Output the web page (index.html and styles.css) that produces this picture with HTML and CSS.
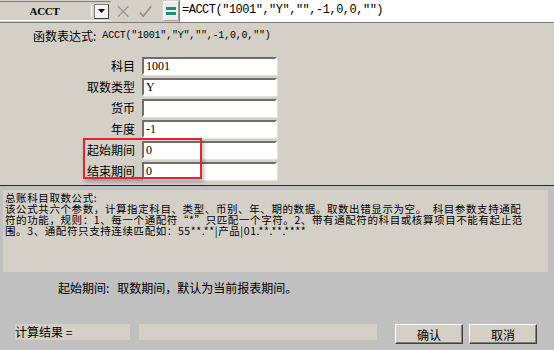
FILE: index.html
```html
<!DOCTYPE html>
<html lang="zh-CN">
<head>
<meta charset="UTF-8" />
<title>ACCT 函数</title>
<link rel="stylesheet" href="styles.css">
</head>
<body>

<!-- Formula bar -->
<div class="toolbar">
  <div class="combo">
    <span class="combo-text">ACCT</span>
    <span class="combo-btn">
      <svg width="7" height="4" viewBox="0 0 7 4"><path d="M0 0h7L3.5 4z" fill="#000"/></svg>
    </span>
  </div>
  <div class="tools">
    <svg class="tool" width="13" height="13" viewBox="0 0 13 13">
      <path d="M1 1L12 12M12 1L1 12" stroke="#9a9a9a" stroke-width="1.6" fill="none"/>
    </svg>
    <svg class="tool" width="14" height="13" viewBox="0 0 14 13">
      <path d="M1 7.5L4.5 11.5L13 1" stroke="#909090" stroke-width="1.8" fill="none"/>
    </svg>
    <span class="tool-eq">
      <svg width="10" height="10" viewBox="0 0 10 10">
        <rect x="0" y="1" width="10" height="3" fill="#1e8c7c"/>
        <rect x="0" y="6" width="10" height="3" fill="#1e8c7c"/>
      </svg>
    </span>
  </div>
  <div class="formula">=ACCT("1001","Y","",-1,0,0,"")</div>
</div>

<!-- Parameters -->
<div class="upper">
  <div class="expr">
    <span class="expr-label">函数表达式:</span>
    <span class="expr-code">ACCT("1001","Y","",-1,0,0,"")</span>
  </div>

  <div class="params">
    <label class="param-label">科目</label>
    <div class="field">1001</div>
    <label class="param-label">取数类型</label>
    <div class="field">Y</div>
    <label class="param-label">货币</label>
    <div class="field"></div>
    <label class="param-label">年度</label>
    <div class="field">-1</div>
    <label class="param-label">起始期间</label>
    <div class="field">0</div>
    <label class="param-label">结束期间</label>
    <div class="field">0</div>
  </div>

  <!-- highlight around the period rows -->
  <div class="mark"></div>
</div>

<!-- Help + result -->
<div class="lower">
  <div class="desc">
    <span class="desc-line">总账科目取数公式:</span>
    <span class="desc-line">该公式共六个参数，计算指定科目、类型、币别、年、期的数据。取数出错显示为空。　科目参数支持通配</span>
    <span class="desc-line">符的功能，规则：1、每一个通配符“*”只匹配一个字符。2、带有通配符的科目或核算项目不能有起止范</span>
    <span class="desc-line">围。3、通配符只支持连续匹配如：55**.**|产品|01.**.**.****</span>
  </div>

  <div class="hint">
    <span class="hint-label">起始期间:</span>
    <span>取数期间，默认为当前报表期间。</span>
  </div>

  <div class="footer">
    <div class="result-label">计算结果 =</div>
    <div class="result-value"></div>
    <button class="btn btn-ok">确认</button>
    <button class="btn">取消</button>
  </div>
</div>

</body>
</html>
```

FILE: styles.css
```css
/* Reset */
* {
  margin: 0; padding: 0; box-sizing: border-box;
}
html, body {
  width: 554px;
  height: 350px;
  overflow: hidden;
}
body {
  background: #c0c0c0;
  font-family: "Noto Sans CJK SC", "Liberation Sans", sans-serif;
  font-size: 12px;
  color: #000;
}

/* Formula bar */
.toolbar {
  display: flex;
  height: 23px;
  background: #d4d0c8;
  border-bottom: 1px solid #7a7a7a;
}
.combo {
  display: flex;
  align-items: center;
  width: 111px;
  height: 20px;
  margin-top: 1px;
  border-top: 1px solid #808080;
  border-bottom: 1px solid #ffffff;
}
.combo-text {
  flex: 0 0 92px;
  text-align: center;
  font-family: "Liberation Serif", serif;
  font-size: 11px;
  font-weight: 700;
  letter-spacing: -0.3px;
  padding-right: 2px;
  border-right: 1px solid #ffffff;
}
.combo-btn {
  display: flex;
  justify-content: center;
  align-items: center;
  width: 15px;
  height: 15px;
  margin-left: 2px;
  background: #f4f4f4;
  border: 1px solid #404040;
  border-top-color: #808080;
  border-left-color: #808080;
}
.tools {
  display: flex;
  align-items: center;
  gap: 10px;
  padding-left: 6px;
  width: 68px;
}
.tool {
  display: block;
}
.tool-eq {
  display: flex;
  justify-content: center;
  align-items: center;
  width: 17px;
  height: 20px;
  background: #ecebe6;
  border: 1px solid #ffffff;
  border-right-color: #a0a0a0;
  border-bottom-color: #a0a0a0;
}
.formula {
  flex: 1;
  background: #fff;
  border-left: 1px solid #808080;
  padding: 3px 0 0 2px;
  font-family: "Liberation Mono", monospace;
  font-size: 12px;
  letter-spacing: -0.5px;
  white-space: nowrap;
}

/* Parameters area */
.upper {
  position: relative;
  height: 163px;
  background: #d4d0c8;
  border-bottom: 1px solid #2a2a2a;
}
.expr {
  display: flex;
  align-items: center;
  gap: 6px;
  padding: 5px 0 0 33px;
  line-height: 16px;
}
.expr-code {
  font-family: "Liberation Mono", monospace;
  font-size: 10px;
  letter-spacing: -0.2px;
}
.params {
  display: grid;
  grid-template-columns: 135px 135px;
  grid-auto-rows: 18px;
  column-gap: 7px;
  row-gap: 3px;
  margin-top: 13px;
}
.param-label {
  text-align: right;
  line-height: 18px;
}
.field {
  background: #fff;
  border: 2px solid #ffffff;
  border-top-color: #6e6e6e;
  border-left-color: #6e6e6e;
  box-shadow: 1px 1px 0 #e4e2dc;
  padding-left: 2px;
  font-family: "Liberation Serif", serif;
  font-size: 12px;
  line-height: 14px;
}
.mark {
  position: absolute;
  left: 83px;
  top: 115px;
  width: 119px;
  height: 41px;
  border: 2px solid #e3262b;
  box-shadow: 2px 3px 4px rgba(0, 0, 0, 0.25);
}

/* Help text */
.lower {
  padding: 0 6px 0 3px;
}
.desc {
  height: 82px;
  margin-top: 4px;
  padding: 2px 0 0 2px;
  background: #d4d0c8;
  font-size: 10.5px;
  line-height: 11px;
  letter-spacing: 0.6px;
}
.desc-line {
  display: block;
  white-space: nowrap;
}
.hint {
  display: flex;
  gap: 8px;
  padding-left: 55px;
  margin-top: 9px;
  line-height: 14px;
}

/* Result row */
.footer {
  display: flex;
  align-items: flex-start;
  margin-top: 29px;
  padding-left: 12px;
}
.result-label {
  width: 115px;
  height: 16px;
  background: #d4d0c8;
  line-height: 16px;
}
.result-value {
  width: 238px;
  height: 16px;
  margin-left: 9px;
  background: #d4d0c8;
}
.btn {
  width: 68px;
  height: 20px;
  margin-left: 6px;
  background: #d4d0c8;
  font-family: inherit;
  font-size: 12px;
  border: 1px solid #ffffff;
  border-right-color: #404040;
  border-bottom-color: #404040;
  box-shadow: inset -1px -1px 0 #808080;
}
.btn-ok {
  margin-left: 18px;
}
```
